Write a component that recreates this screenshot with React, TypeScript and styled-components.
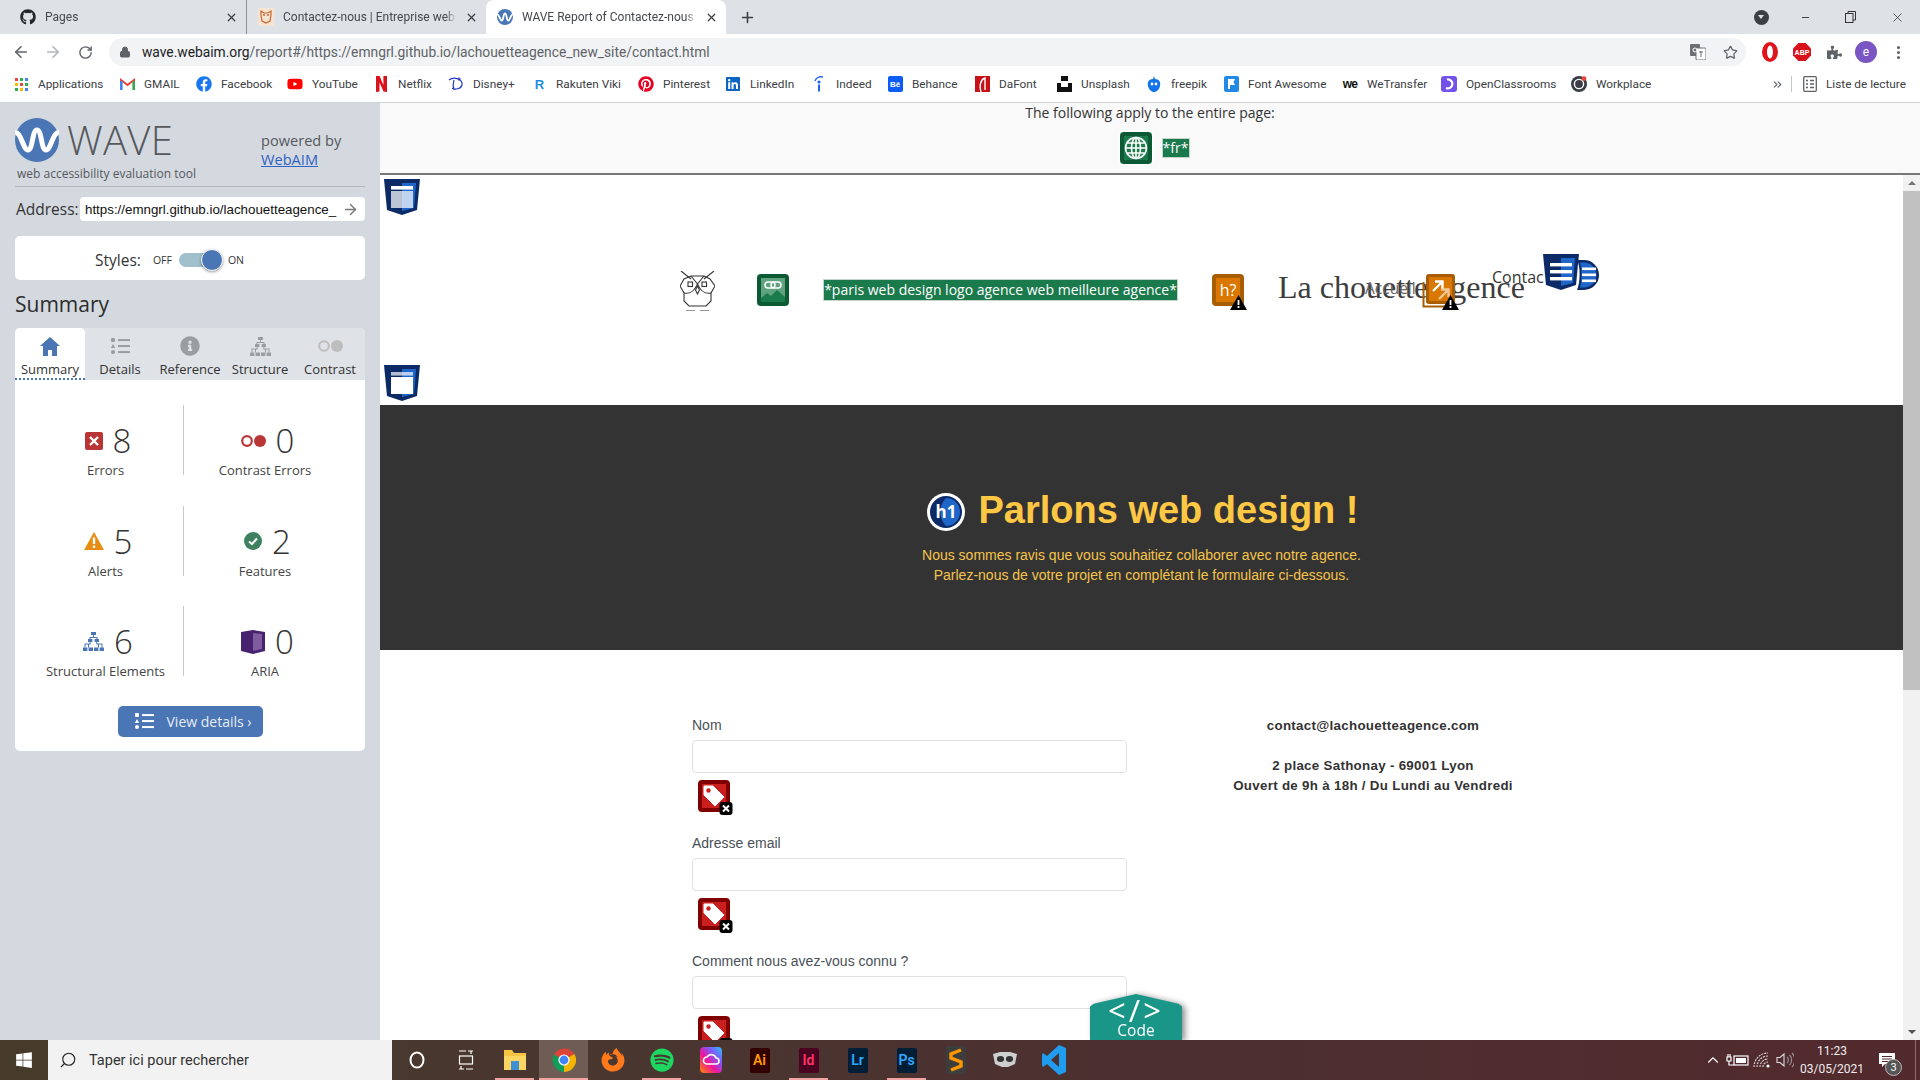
import React from "react";
import styled, { createGlobalStyle } from "styled-components";
import { ArrowLeft, ArrowRight, RotateCw, Star, Lock, X, Plus, Minus, Search, ChevronsRight, ArrowRight as Go, ChevronUp } from "lucide-react";
import { FaGithub, FaFacebook, FaYoutube, FaPinterest, FaLinkedin, FaSpotify, FaWindows, FaFirefoxBrowser, FaInfoCircle, FaPuzzlePiece } from "react-icons/fa";

const Global = createGlobalStyle`
  html, body { margin: 0; padding: 0; width: 1920px; height: 1080px; overflow: hidden; background: #fff; }
  * { box-sizing: border-box; }
  #root { width: 1920px; height: 1080px; }
`;

const chromeFont = `Roboto, "Liberation Sans", sans-serif`;
const waveFont = `"Open Sans", "Noto Sans", sans-serif`;
const arial = `"Liberation Sans", Arial, sans-serif`;

const Screen = styled.div`
  width: 1920px; height: 1080px; display: flex; flex-direction: column; overflow: hidden;
`;

/* ---------- tab strip ---------- */
const TabStrip = styled.div`
  height: 34px; flex: none; background: #dee1e6; display: flex; align-items: stretch;
`;
const Tab = styled.div<{ $w: number; $pl: number; $active?: boolean; $sep?: boolean }>`
  width: ${p => p.$w}px; flex: none; display: flex; align-items: center; gap: 9px;
  padding: 0 8px 0 ${p => p.$pl}px; font: 12px ${chromeFont}; color: #45484c;
  background: ${p => (p.$active ? "#fff" : "transparent")};
  border-radius: ${p => (p.$active ? "8px 8px 0 0" : "0")};
  border-right: ${p => (p.$sep ? "1px solid #8e9297" : "0")};
`;
const TabLabel = styled.span`
  flex: 1; min-width: 0; overflow: hidden; white-space: nowrap;
  mask-image: linear-gradient(90deg, #000 calc(100% - 10px), transparent 100%);
`;
const TabClose = styled(X)`
  width: 13px; height: 13px; flex: none; color: #3c4043; stroke-width: 2.4;
`;
const NewTab = styled.div`
  width: 42px; display: flex; align-items: center; justify-content: center; color: #3c4043;
`;
const WindowControls = styled.div`
  margin-left: auto; display: flex; align-items: center;
`;
const WinCell = styled.div<{ $w: number }>`
  width: ${p => p.$w}px; display: flex; align-items: center; justify-content: center; color: #333;
`;
const ProfileDot = styled.div`
  width: 15px; height: 15px; border-radius: 50%; background: #3c4043; display: flex; align-items: center; justify-content: center;
  &::after { content: ""; border-left: 3px solid transparent; border-right: 3px solid transparent; border-top: 4px solid #dee1e6; }
`;

/* ---------- toolbar ---------- */
const Toolbar = styled.div`
  height: 34px; flex: none; background: #fff; display: flex; align-items: center; padding: 2px 6px 0 5px;
`;
const ToolBtn = styled.div<{ $c?: string }>`
  width: 32px; height: 32px; flex: none; display: flex; align-items: center; justify-content: center; color: ${p => p.$c || "#5f6368"};
`;
const UrlPill = styled.div`
  margin: 0 8px; flex: 1; height: 28px; border-radius: 14px; background: #f1f3f4; display: flex; align-items: center; padding: 0 0 0 10px;
`;
const UrlText = styled.div`
  flex: 1; margin-left: 11px; font: 13.8px ${chromeFont}; color: #5f6368; white-space: nowrap;
  b { font-weight: 400; color: #202124; }
`;
const Avatar = styled.div`
  width: 22px; height: 22px; border-radius: 50%; background: #7b55c4; color: #fff; font: 12px ${chromeFont}; display: flex; align-items: center; justify-content: center;
`;
const MenuDots = styled.div`
  width: 3px; height: 3px; border-radius: 50%; background: #5f6368; box-shadow: 0 -5px 0 #5f6368, 0 5px 0 #5f6368;
`;

/* ---------- bookmarks ---------- */
const BookmarkBar = styled.div`
  height: 35px; flex: none; background: #fff; border-bottom: 1px solid #d0d2d5; display: flex; align-items: center; padding: 0 0 2px 13px;
`;
const Bookmark = styled.div<{ $w: number }>`
  width: ${p => p.$w}px; flex: none; display: flex; align-items: center; gap: 9px; font: 11.8px ${chromeFont}; color: #3c4043; white-space: nowrap;
`;
const BmIcon = styled.span`
  width: 16px; height: 16px; flex: none; display: flex; align-items: center; justify-content: center;
`;
const BmTile = styled.span<{ $bg: string; $c?: string }>`
  width: 15px; height: 16px; border-radius: 2px; background: ${p => p.$bg}; color: ${p => p.$c || "#fff"};
  font: 700 8px ${arial}; display: flex; align-items: center; justify-content: center; overflow: hidden;
`;
const BmGlyph = styled.span<{ $c: string; $s?: number }>`
  font: 900 ${p => p.$s || 13}px ${arial}; color: ${p => p.$c}; letter-spacing: -.8px;
`;
const BarEnd = styled.div`
  margin-left: auto; display: flex; align-items: center; font: 11.8px ${chromeFont}; color: #3c4043; padding-right: 2px;
`;
const Sep = styled.div`
  width: 1px; height: 16px; background: #c4c7ca; margin: 0 11px 0 7px;
`;
const ReadingLabel = styled.span`
  margin-left: 9px; width: 92px; white-space: nowrap;
`;

/* ---------- body ---------- */
const Body = styled.div`
  flex: 1; min-height: 0; display: flex;
`;
const Sidebar = styled.aside`
  width: 380px; flex: none; background: #d4d9e0; padding: 0 15px; font-family: ${waveFont}; color: #333;
`;
const Brand = styled.div`
  display: flex; border-bottom: 1px solid #b4b8bd; padding: 15px 0 3px; height: 84px;
`;
const BrandLeft = styled.div`
  width: 246px; flex: none;
`;
const LogoRow = styled.div`
  display: flex; align-items: center; gap: 8px; height: 44px;
`;
const WaveWord = styled.div`
  font: 300 40px/44px ${waveFont}; color: #55585c; letter-spacing: .3px;
`;
const Tagline = styled.div`
  font-size: 12px; line-height: 18px; color: #55585c; margin: 3px 0 0 2px; white-space: nowrap;
`;
const Powered = styled.div`
  padding-top: 13px; font-size: 14.6px; line-height: 19px; color: #55585c;
  a { color: #2f62c4; text-decoration: underline; }
`;
const AddressRow = styled.div`
  display: flex; align-items: center; margin-top: 10px; height: 24px;
`;
const AddressLabel = styled.div`
  width: 65px; flex: none; padding-left: 1px; font-size: 15.5px; color: #333;
`;
const AddressBox = styled.div`
  flex: 1; height: 24px; border-radius: 4px; background: #fff; display: flex; align-items: center; padding: 0 6px 0 5px; overflow: hidden;
`;
const AddressText = styled.div`
  width: 252px; flex: none; overflow: hidden; white-space: nowrap; font: 13.33px ${arial}; color: #111;
`;
const AddressGo = styled.div`
  margin-left: auto; display: flex; color: #777;
`;
const StylesCard = styled.div`
  margin-top: 15px; height: 44px; background: #fff; border-radius: 5px; display: flex; align-items: center; padding: 4px 0 0 80px;
`;
const StylesLabel = styled.span`
  font-size: 15.5px; color: #333; margin-right: 12px;
`;
const SwitchText = styled.span`
  font-size: 10.5px; color: #333;
`;
const Track = styled.div`
  position: relative; width: 27px; height: 14px; border-radius: 7px 0 0 7px; background: #9fc0cc; margin: 0 22px 0 7px;
`;
const Knob = styled.div`
  position: absolute; left: 22px; top: -4px; width: 22px; height: 22px; border-radius: 50%; background: #4a76b5; border: 1px solid #fff; box-shadow: 0 1px 3px rgba(0,0,0,.4);
`;
const SummaryTitle = styled.h2`
  margin: 9px 0 9px; font: 400 21px/30px ${waveFont}; color: #2c2c2c;
`;
const Panel = styled.div`
  background: #fff; border-radius: 5px; height: 423px;
`;
const Tabs = styled.div`
  display: flex; height: 52px; background: #dfe2e6; border-radius: 5px 5px 0 0;
`;
const SumTab = styled.div<{ $active?: boolean }>`
  width: 70px; display: flex; flex-direction: column; align-items: center; font-size: 13px; color: #333; padding-top: 6px;
  background: ${p => (p.$active ? "#fff" : "transparent")};
  border-radius: ${p => (p.$active ? "5px 5px 0 0" : "0")};
  border-bottom: 2px ${p => (p.$active ? "dotted #4a76b5" : "solid transparent")};
`;
const SumTabIcon = styled.div`
  height: 24px; display: flex; align-items: center; justify-content: center;
`;
const SumTabLabel = styled.div`
  line-height: 18px; margin-top: 2px; white-space: nowrap;
`;
const StatGrid = styled.div`
  padding: 25px 0 0 13px; display: grid; grid-template-columns: 156px 162px; grid-auto-rows: 70px; row-gap: 30.5px;
`;
const Stat = styled.div<{ $divider?: boolean }>`
  display: flex; flex-direction: column; align-items: center; padding-top: 15px;
  border-right: ${p => (p.$divider ? "1px solid #c9c9c9" : "0")};
`;
const StatTop = styled.div`
  display: flex; align-items: center; gap: 10px; height: 41px; padding-left: 5px; font: 300 33px/41px ${waveFont}; color: #333;
`;
const StatLabel = styled.div`
  font-size: 13px; line-height: 18px; color: #444; white-space: nowrap;
`;
const DetailsBtn = styled.div`
  width: 145px; height: 31px; margin: 30px auto 0; background: #4a76b5; border-radius: 5px; display: flex; align-items: center; padding-left: 17px; gap: 13px; color: #e6edf6; font-size: 14px;
`;

/* ---------- main ---------- */
const Main = styled.main`
  flex: 1; min-width: 0; display: flex; flex-direction: column; background: #fff;
`;
const PageWide = styled.div`
  height: 72px; flex: none; background: #f9f9f9; border-bottom: 2px solid #777; display: flex; flex-direction: column; align-items: center; font-family: ${waveFont}; padding-top: 1px;
`;
const WideText = styled.div`
  font-size: 14px; line-height: 18px; color: #333;
`;
const WideIcons = styled.div`
  display: flex; align-items: center; gap: 10px; margin-top: 10px; margin-left: 9px;
`;
const GlobeWrap = styled.div`
  display: flex; border-radius: 4px; box-shadow: 0 0 0 2px #fff;
`;
const LangTag = styled.div`
  height: 20px; width: 28px; background: #1a7a4c; border: 1px solid #c4d6cc; color: #fff; font-size: 14px; line-height: 17px; text-align: center; white-space: nowrap;
`;
const ViewRow = styled.div`
  flex: 1; min-height: 0; display: flex;
`;
const PageView = styled.div`
  flex: 1; min-width: 0; position: relative; overflow: hidden; display: flex; flex-direction: column;
`;
const SiteHeader = styled.div`
  position: relative; height: 230px; flex: none;
`;
const Pin = styled.div<{ $x: number; $y: number }>`
  position: absolute; left: ${p => p.$x}px; top: ${p => p.$y}px;
`;
const AltLabel = styled.div`
  width: 355px; height: 22px; background: #1a7a4c; border: 1px solid #c4d6cc; color: #fff; font: 14px/19px ${waveFont}; white-space: nowrap; overflow: hidden; text-align: center;
`;
const LogoText = styled.div`
  font: 32px/36px "Liberation Serif", serif; color: #3d3d3d; white-space: nowrap;
`;
const NavText = styled.div<{ $soft?: boolean }>`
  font: ${p => (p.$soft ? 15.5 : 16)}px/22px ${waveFont}; color: ${p => (p.$soft ? "#666" : "#333")}; white-space: nowrap;
`;
const Hero = styled.section`
  height: 245px; flex: none; background: #333; display: flex; flex-direction: column; align-items: center; padding-top: 83px; font-family: ${arial};
`;
const HeroTitle = styled.h1`
  margin: 0; padding-left: 3px; display: flex; align-items: center; gap: 13px; font: 700 38px/44px ${arial}; color: #fec844;
`;
const HeroBadgeWrap = styled.span`
  display: flex; margin-top: 4px;
`;
const HeroPara = styled.p`
  margin: 13px 0 0; font: 14px/20px ${arial}; color: #f7c44b; text-align: center;
`;
const FormSection = styled.section`
  flex: 1; display: flex; padding: 65px 0 0 312px; font-family: ${arial};
`;
const FormCol = styled.div`
  width: 435px; flex: none;
`;
const Field = styled.div`
  margin-bottom: 21px;
`;
const FieldLabel = styled.div`
  font: 14px/20px ${arial}; color: #495057; margin-bottom: 6px;
`;
const FieldInput = styled.div`
  height: 33px; margin-top: -1px; border: 1px solid #dfe1e4; border-radius: 4px; background: #fff; margin-bottom: 7px;
`;
const FieldIcon = styled.div`
  margin-left: 6px; height: 32px;
`;
const InfoCol = styled.div`
  width: 492px; flex: none; padding-top: 1px; text-align: center; font: 700 13.33px/20px ${arial}; color: #333; letter-spacing: .3px;
  p { margin: 0 0 20px; }
`;
const CodeWrap = styled.div`
  position: absolute; left: 710px; bottom: 0; filter: drop-shadow(3px 1px 3px rgba(0,0,0,.45));
`;
const CodeTab = styled.div`
  width: 92px; height: 46px; background: #1a9688; clip-path: polygon(50% 0, 96% 21%, 100% 27%, 100% 100%, 0 100%, 0 27%, 4% 21%);
  color: #fff; display: flex; flex-direction: column; align-items: center; font-family: ${waveFont};
`;
const CodeGlyph = styled.div`
  font: 400 31px/28px ${waveFont}; margin-top: 2px; letter-spacing: 3px; height: 25px;
`;
const CodeWord = styled.div`
  font-size: 15.5px; line-height: 18px;
`;
const Scrollbar = styled.div`
  width: 17px; flex: none; background: #f1f1f1; display: flex; flex-direction: column; align-items: center; padding-top: 6px;
`;
const ScrollUp = styled.div`
  border-left: 4px solid transparent; border-right: 4px solid transparent; border-bottom: 4px solid #777;
`;
const ScrollThumb = styled.div`
  width: 17px; height: 499px; background: #c1c1c1; margin-top: 6px;
`;
const ScrollDown = styled.div`
  margin-top: auto; margin-bottom: 6px; border-left: 4px solid transparent; border-right: 4px solid transparent; border-top: 4px solid #505050;
`;

/* ---------- taskbar ---------- */
const Taskbar = styled.footer`
  height: 40px; flex: none; display: flex; align-items: stretch;
  background: linear-gradient(90deg, #463a2b 0%, #4a3630 35%, #4c2f30 60%, #522a2e 100%);
`;
const StartBtn = styled.div`
  width: 48px; flex: none; display: flex; align-items: center; justify-content: center; color: #fff;
`;
const SearchBox = styled.div`
  width: 344px; flex: none; background: #f2f2f2; display: flex; align-items: center; padding-left: 11px; gap: 12px; font: 14.5px ${chromeFont}; color: #333;
`;
const SearchGlyph = styled(Search)`
  transform: scaleX(-1); color: #222; stroke-width: 1.5;
`;
const TaskItem = styled.div<{ $on?: boolean; $run?: boolean }>`
  width: 49px; flex: none; position: relative; display: flex; align-items: center; justify-content: center;
  background: ${p => (p.$on ? "#6f5c54" : "transparent")};
  &::after {
    content: ""; display: ${p => (p.$run ? "block" : "none")}; position: absolute; left: ${p => (p.$on ? 0 : 5)}px; right: ${p => (p.$on ? 0 : 5)}px; bottom: 0; height: 2px; background: #f2a3a3;
  }
`;
const AppTile = styled.div<{ $bg: string; $c: string }>`
  width: 20px; height: 25px; border-radius: 2px; background: ${p => p.$bg}; color: ${p => p.$c}; font: 600 14px ${chromeFont}; display: flex; align-items: center; justify-content: center;
`;
const Tray = styled.div`
  margin-left: auto; display: flex; align-items: center; color: #fff;
`;
const TrayCell = styled.div<{ $w: number }>`
  width: ${p => p.$w}px; height: 40px; position: relative; display: flex; align-items: center; justify-content: center;
`;
const Clock = styled.div`
  font: 12px/18px ${chromeFont}; text-align: center; color: #f0ecec;
`;
const NotifBadge = styled.div`
  position: absolute; left: 17px; top: 19px; width: 17px; height: 17px; border-radius: 50%; background: #555; border: 1px solid #bbb; color: #fff; font: 11px/15px ${chromeFont}; text-align: center;
`;
const ShowDesktop = styled.div`
  width: 5px; height: 40px; margin-left: 9px; border-left: 1px solid #8a6f6f;
`;

/* ---------- drawings ---------- */
const WaveLogo = ({ s = 44 }: { s?: number }) => (
  <svg width={s} height={s} viewBox="0 0 44 44">
    <circle cx="22" cy="22" r="22" fill="#4a76b5" />
    <path d="M0 15 C6 13 8 32 13 32 C18 32 17 12 22 12 C27 12 26 32 31 32 C36 32 38 13 44 15" fill="none" stroke="#fff" strokeWidth="5" />
  </svg>
);
const OwlFav = () => (
  <svg width="16" height="18" viewBox="0 0 16 18">
    <rect width="16" height="18" fill="#f6e3d2" />
    <path d="M3 3l3 2h4l3-2v4l-1 6-4 2-4-2-1-6z" fill="none" stroke="#c9682e" strokeWidth="1.2" />
    <circle cx="6" cy="7" r="1" fill="#c9682e" /><circle cx="10" cy="7" r="1" fill="#c9682e" />
  </svg>
);
const Shield = ({ kind }: { kind: "header" | "main" | "nav" }) => (
  <svg width="36" height="36" viewBox="0 0 36 36">
    <polygon points="0,0 36,0 33,31 18,36 3,31" fill="#0b2a66" />
    <polygon points="18,4 32,4 30,29 18,32" fill="#1f66c9" />
    {kind === "nav" ? (
      <g fill="#fff"><rect x="7" y="9" width="22" height="3.4" /><rect x="7" y="16" width="22" height="3.4" /><rect x="7" y="23" width="22" height="3.4" /></g>
    ) : (
      <>
        <rect x="7" y="7" width="22" height="3.6" fill="#fff" opacity={kind === "header" ? 1 : 0.7} />
        <rect x="7" y="12" width="22" height="17" fill="#fff" opacity={kind === "main" ? 1 : 0.72} />
      </>
    )}
  </svg>
);
const NavCircle = () => (
  <svg width="23" height="32" viewBox="0 0 23 32">
    <path d="M0 1 H7 A15 15 0 0 1 7 31 H0 C3 25 4 8 0 1Z" fill="#0b2a66" />
    <path d="M3 3.5 H7 A12.5 12.5 0 0 1 7 28.5 H3 C5 22 5 9 3 3.5Z" fill="#1f66c9" />
    <g fill="#fff"><rect x="5" y="8.5" width="14" height="2.6" /><rect x="5" y="14.5" width="14" height="2.6" /><rect x="5" y="20.5" width="14" height="2.6" /></g>
  </svg>
);
const Owl = () => (
  <svg width="35" height="40" viewBox="0 0 35 40" fill="none" stroke="#333" strokeWidth="1.1">
    <path d="M1 0 L11 8 M34 0 L24 8" />
    <path d="M11 5 H24 L30 8 L35 15 L31 22 V30 L26 35 H9 L4 30 V22 L0 15 L4 8Z" />
    <path d="M11 5 L17.5 13 L24 5 M4 22 C10 23 14 21 17.5 13 C21 21 25 23 31 22" />
    <rect x="8" y="11" width="4.5" height="4.5" /><rect x="22" y="11" width="4.5" height="4.5" />
    <path d="M17.5 15 L15.5 19 L17.5 23 L19.5 19Z" />
    <path d="M6 39.5 H15 M20 39.5 H29" stroke="#999" />
  </svg>
);
const LinkImage = () => (
  <svg width="32" height="32" viewBox="0 0 32 32">
    <rect width="32" height="32" rx="4" fill="#0b5a33" />
    <rect x="4" y="4" width="24" height="24" fill="#5fa27f" />
    <path d="M4 24 L10 19 L14 22 L20 16 L28 23 V28 H4Z" fill="#1a7a4c" />
    <g fill="none" stroke="#fff" strokeWidth="1.5">
      <rect x="8" y="8" width="10" height="6" rx="3" /><rect x="14" y="8" width="10" height="6" rx="3" />
    </g>
  </svg>
);
const GlobeIcon = () => (
  <svg width="32" height="32" viewBox="0 0 32 32" fill="none">
    <rect width="32" height="32" rx="4" fill="#0b5a33" />
    <rect x="4" y="4" width="24" height="24" fill="#1a7a4c" />
    <g stroke="#fff" strokeWidth="1.6">
      <circle cx="16" cy="16" r="10.5" /><ellipse cx="16" cy="16" rx="4.5" ry="10.5" />
      <path d="M16 5.5 V26.5 M5.5 16 H26.5 M7 11 H25 M7 21 H25" />
    </g>
  </svg>
);
const H1Badge = () => (
  <svg width="38" height="38" viewBox="0 0 38 38">
    <circle cx="19" cy="19" r="19" fill="#fff" />
    <circle cx="19" cy="19" r="16" fill="#0b2a66" />
    <path d="M19 5 A14 14 0 0 1 19 33 A20 20 0 0 1 19 5" fill="#1f66c9" />
    <text x="19" y="25" textAnchor="middle" fontFamily={waveFont} fontSize="17" fill="#fff">h1</text>
  </svg>
);
const HQuestion = () => (
  <svg width="36" height="36" viewBox="0 0 36 36">
    <rect width="32" height="32" rx="4" fill="#a85e00" />
    <rect x="4" y="4" width="24" height="24" fill="#d97700" />
    <text x="16" y="22" textAnchor="middle" fontFamily={waveFont} fontSize="16" fill="#fff">h?</text>
    <g transform="translate(18,21)"><polygon points="8.5,0 17,15 0,15" fill="#000" /><rect x="7.6" y="5" width="1.8" height="5" fill="#fff" /><rect x="7.6" y="11" width="1.8" height="2" fill="#fff" /></g>
  </svg>
);
const External = () => (
  <svg width="38" height="38" viewBox="0 0 38 38">
    <path d="M1.5 8 V32.5 H28" fill="none" stroke="#a85e00" strokeWidth="2" />
    <rect x="4" y="0" width="29" height="30" rx="3" fill="#a85e00" />
    <rect x="7" y="3" width="23" height="24" fill="#d97700" />
    <path d="M11 17 L20 8 M13 7.5 H20.5 V15" fill="none" stroke="#fff" strokeWidth="2.4" />
    <path d="M17 25 L26 16 M19 15.5 H26.5 V23" fill="none" stroke="#f2c79a" strokeWidth="2.4" />
    <g transform="translate(20,21)"><polygon points="8.5,0 17,15 0,15" fill="#000" /><rect x="7.6" y="5" width="1.8" height="5" fill="#fff" /><rect x="7.6" y="11" width="1.8" height="2" fill="#fff" /></g>
  </svg>
);
const TagError = () => (
  <svg width="36" height="36" viewBox="0 0 36 36">
    <rect width="32" height="32" rx="4" fill="#800000" />
    <rect x="4" y="4" width="24" height="24" fill="#c91f1f" />
    <path d="M6 6 H15 L26 17 L17 26 L6 15Z" fill="#fff" stroke="#fff" strokeLinejoin="round" />
    <circle cx="10.5" cy="10.5" r="2.2" fill="#c91f1f" />
    <rect x="21.5" y="22" width="13" height="13" rx="3" fill="#000" />
    <path d="M25 25.5 L31 31.5 M31 25.5 L25 31.5" stroke="#fff" strokeWidth="2" />
  </svg>
);
const HomeGlyph = () => (
  <svg width="20" height="19" viewBox="0 0 20 19" fill="#4a76b5">
    <polygon points="10,0 20,9 17,9 17,19 12,19 12,13 8,13 8,19 3,19 3,9 0,9" />
  </svg>
);
const ListIcon = ({ c, w = 19 }: { c: string; w?: number }) => (
  <svg width={w} height={w * 0.85} viewBox="0 0 19 16" fill={c}>
    <rect x="0" y="0" width="4" height="4" rx="1" /><polygon points="2,6 4.2,10 -.2,10" /><circle cx="2" cy="14" r="2" />
    <rect x="7" y="1" width="12" height="2" /><rect x="7" y="7" width="12" height="2" /><rect x="7" y="13" width="12" height="2" />
  </svg>
);
const TreeGlyph = ({ c }: { c: string }) => (
  <svg width="21" height="19" viewBox="0 0 21 19" fill={c}>
    <rect x="8" y="0" width="5" height="3" />
    <rect x="5" y="7" width="4.4" height="3" /><rect x="11.6" y="7" width="4.4" height="3" />
    <rect x="0" y="15.5" width="4.4" height="3.5" /><rect x="5.6" y="15.5" width="4.4" height="3.5" /><rect x="11" y="15.5" width="4.4" height="3.5" /><rect x="16.6" y="15.5" width="4.4" height="3.5" />
    <path d="M10 3 h1 v2 h3.5 v2 h-1 v-1 h-6 v1 h-1 v-2 h3.5z" />
    <path d="M6.6 10 h1 v2.5 h-1.6 v3 h-1 v-3 h-2.5 v3 h-1 v-4 h5.1z M13.3 10 h1 v1.5 h5.2 v4 h-1 v-3 h-2.5 v3 h-1 v-3 h-1.7z" />
  </svg>
);
const ContrastGlyph = ({ c, w, sw = 2 }: { c: string; w: number; sw?: number }) => (
  <svg width={w} height={w * 0.48} viewBox="0 0 25 12">
    <circle cx="6" cy="6" r="4.8" fill="none" stroke={c} strokeWidth={sw} /><circle cx="19" cy="6" r="6" fill={c} />
  </svg>
);
const ErrorGlyph = () => (
  <svg width="18" height="18" viewBox="0 0 18 18">
    <rect width="18" height="18" rx="2" fill="#b93536" />
    <path d="M5 5 L13 13 M13 5 L5 13" stroke="#fff" strokeWidth="2.4" />
  </svg>
);
const AlertGlyph = () => (
  <svg width="20" height="18" viewBox="0 0 20 18">
    <polygon points="10,0 20,18 0,18" fill="#e68d12" /><rect x="8.8" y="5.5" width="2.4" height="6.5" fill="#fff" /><rect x="8.8" y="13.5" width="2.4" height="2.4" fill="#fff" />
  </svg>
);
const FeatureGlyph = () => (
  <svg width="18" height="18" viewBox="0 0 18 18">
    <circle cx="9" cy="9" r="9" fill="#3e8060" /><path d="M5 9.5 L8 12 L13 6.5" fill="none" stroke="#fff" strokeWidth="2" />
  </svg>
);
const AriaGlyph = () => (
  <svg width="24" height="24" viewBox="0 0 24 24">
    <polygon points="0,2 12,0 24,2 24,21 12,24 0,21" fill="#46226f" /><polygon points="12,3 21,4 21,19 12,21" fill="#7e5c9e" />
  </svg>
);
const Apps = () => (
  <svg width="13" height="13" viewBox="0 0 13 13">
    {["#e8453c", "#34a853", "#4285f4", "#fbbc05", "#e8453c", "#34a853", "#34a853", "#fbbc05", "#4285f4"].map((c, i) => (
      <rect key={i} x={(i % 3) * 5} y={Math.floor(i / 3) * 5} width="3" height="3" fill={c} />
    ))}
  </svg>
);
const Gmail = () => (
  <svg width="15" height="12" viewBox="0 0 15 12">
    <path d="M1 11 V2 L7.5 7 L14 2 V11" fill="none" stroke="#ea4335" strokeWidth="2" />
    <rect x="0" y="3" width="2.6" height="9" fill="#4285f4" /><rect x="12.4" y="3" width="2.6" height="9" fill="#34a853" />
  </svg>
);
const Netflix = () => (
  <svg width="11" height="16" viewBox="0 0 11 16"><path d="M0 0 H3.6 L7.4 9 V0 H11 V16 L7.5 15.5 L3.5 6.5 V15.5 L0 16Z" fill="#d9131d" /></svg>
);
const Disney = () => (
  <svg width="16" height="16" viewBox="0 0 16 16" fill="none" stroke="#2236c8" strokeWidth="1.2">
    <path d="M1 4 C6 0 15 3 14 9 C13 13 7 14 4 12 M6 4 C5 7 5 11 6 14" /><path d="M11 1 V5 M9 3 H13" strokeWidth=".8" />
  </svg>
);
const Indeed = () => (
  <svg width="10" height="16" viewBox="0 0 10 16" fill="none">
    <path d="M1 5 C2 2 5 0 9 1" stroke="#2164f3" strokeWidth="1.4" /><circle cx="5" cy="6" r="1.6" fill="#2164f3" /><rect x="4" y="8.5" width="2" height="7" fill="#2164f3" />
  </svg>
);
const DaFont = () => (
  <svg width="15" height="16" viewBox="0 0 15 16">
    <rect width="15" height="16" fill="#c8121a" /><path d="M6 16 C4 9 6 3 10 2 V14" fill="none" stroke="#fff" strokeWidth="1.4" />
  </svg>
);
const Unsplash = () => (
  <svg width="15" height="16" viewBox="0 0 15 16" fill="#111"><rect x="4" y="0" width="7" height="5" /><path d="M0 7 H4 V11 H11 V7 H15 V16 H0Z" /></svg>
);
const Freepik = () => (
  <svg width="14" height="16" viewBox="0 0 14 16">
    <path d="M7 0 L8 3 C12 3 14 6 13 10 C12 14 9 16 7 16 C5 16 2 14 1 10 C0 6 2 3 6 3Z" fill="#1273eb" />
    <circle cx="5" cy="8" r="1.4" fill="#fff" /><circle cx="9" cy="8" r="1.4" fill="#fff" />
  </svg>
);
const FontAwesome = () => (
  <svg width="15" height="16" viewBox="0 0 15 16"><rect width="15" height="16" rx="2" fill="#228ae6" /><path d="M4 3 H11 L9.5 6 L11 9 H6 V13 H4Z" fill="#fff" /></svg>
);
const OC = () => (
  <svg width="16" height="16" viewBox="0 0 16 16"><rect width="16" height="16" rx="3" fill="#7451eb" /><path d="M6 3.5 A4.5 4.5 0 1 1 5 12" fill="none" stroke="#fff" strokeWidth="2.2" /></svg>
);
const Workplace = () => (
  <svg width="16" height="16" viewBox="0 0 16 16" fill="none">
    <circle cx="8" cy="8" r="8" fill="#3a3d45" /><circle cx="8" cy="8" r="4.6" stroke="#fff" strokeWidth="1.4" /><circle cx="13" cy="2.6" r="2.4" fill="#e8453c" />
  </svg>
);
const ReadingList = () => (
  <svg width="14" height="16" viewBox="0 0 14 16" fill="none" stroke="#5f6368" strokeWidth="1.3">
    <rect x=".7" y=".7" width="12.6" height="14.6" rx="1" /><path d="M3 4.5 H5 M7 4.5 H11 M3 8 H5 M7 8 H11 M3 11.5 H5 M7 11.5 H11" />
  </svg>
);
const Translate = () => (
  <svg width="16" height="16" viewBox="0 0 16 16">
    <rect x="0" y="0" width="10" height="12" rx="1" fill="#6b6f73" /><rect x="6" y="4" width="10" height="12" rx="1" fill="#fff" stroke="#6b6f73" />
    <circle cx="5" cy="6" r="2" fill="none" stroke="#fff" /><path d="M9 8 H13 M11 7 V13" stroke="#6b6f73" />
  </svg>
);
const Restore = () => (
  <svg width="11" height="12" viewBox="0 0 11 12" fill="none" stroke="#333"><rect x=".5" y="2.5" width="7.5" height="9" /><path d="M3 2.5 V.5 H10.5 V9 H8" /></svg>
);
const OperaBadge = () => (
  <svg width="16" height="20" viewBox="0 0 16 20"><ellipse cx="8" cy="10" rx="8" ry="10" fill="#e0141c" /><ellipse cx="8" cy="10" rx="3" ry="6.5" fill="#fff" /></svg>
);
const AbpBadge = () => (
  <svg width="18" height="18" viewBox="0 0 18 18">
    <polygon points="5.4,0 12.6,0 18,5.4 18,12.6 12.6,18 5.4,18 0,12.6 0,5.4" fill="#d8121b" />
    <text x="9" y="12" textAnchor="middle" fontFamily={arial} fontWeight="700" fontSize="7" fill="#fff">ABP</text>
  </svg>
);
const ChromeLogo = () => (
  <svg width="24" height="24" viewBox="0 0 24 24">
    <path d="M12 12 L2 6.5 A12 12 0 0 1 22.4 6 Z" fill="#db4437" />
    <path d="M12 12 L22.4 6 A12 12 0 0 1 12 24 Z" fill="#f4b400" />
    <path d="M12 12 L12 24 A12 12 0 0 1 2 6.5 Z" fill="#0f9d58" />
    <circle cx="12" cy="12" r="5.6" fill="#fff" /><circle cx="12" cy="12" r="4.4" fill="#4285f4" />
  </svg>
);
const Explorer = () => (
  <svg width="22" height="22" viewBox="0 0 22 22">
    <path d="M0 1 H8 L10 4 H22 V21 H0Z" fill="#f5c543" /><rect x="0" y="7" width="22" height="14" fill="#fbd663" /><rect x="7" y="12" width="8" height="9" fill="#3d8fd6" />
  </svg>
);
const TaskView = () => (
  <svg width="16" height="20" viewBox="0 0 16 20" fill="none" stroke="#fff" strokeWidth="1.2">
    <rect x="1.5" y="6" width="13" height="8" /><path d="M1 1 H8 M10 1 H15 M13 1 V4 M1 19 H6 M8 19 H15 M3 16 V19" />
  </svg>
);
const Cortana = () => (
  <svg width="16" height="20" viewBox="0 0 16 20"><ellipse cx="8" cy="10" rx="6.5" ry="7.5" fill="none" stroke="#fff" strokeWidth="2" /></svg>
);
const CreativeCloud = () => (
  <svg width="22" height="26" viewBox="0 0 22 26">
    <defs><linearGradient id="cc" x1="0" y1="1" x2="1" y2="0"><stop offset="0" stopColor="#ff8a00" /><stop offset=".4" stopColor="#f0149a" /><stop offset=".7" stopColor="#7a5cff" /><stop offset="1" stopColor="#26c6f0" /></linearGradient></defs>
    <rect width="22" height="26" rx="4" fill="url(#cc)" />
    <path d="M7 17 A3.5 3.5 0 0 1 7 10 A5 5 0 0 1 16 11 A3 3 0 0 1 16 17Z" fill="none" stroke="#fff" strokeWidth="1.6" />
  </svg>
);
const Sublime = () => (
  <svg width="20" height="28" viewBox="0 0 20 28">
    <rect width="20" height="28" fill="#3d3d3d" />
    <path d="M15 6 L5 10 V14 L15 18 V22 L5 26" fill="none" stroke="#ff9800" strokeWidth="3.4" transform="translate(0,-2)" />
  </svg>
);
const Mask = () => (
  <svg width="24" height="18" viewBox="0 0 24 18">
    <path d="M0 3 L7 1 H17 L24 3 L22 13 L15 16 H9 L2 13Z" fill="#cfcfcf" />
    <ellipse cx="7.5" cy="8" rx="3.6" ry="3" fill="#333" /><ellipse cx="16.5" cy="8" rx="3.6" ry="3" fill="#333" />
  </svg>
);
const VSCode = () => (
  <svg width="24" height="30" viewBox="0 0 24 30">
    <path d="M17 0 L24 3 V27 L17 30 L5 19 L1 22 L0 20 V10 L1 8 L5 11Z M17 8 L9 15 L17 22Z" fill="#1f9cf0" fillRule="evenodd" />
  </svg>
);
const Battery = () => (
  <svg width="24" height="14" viewBox="0 0 24 14" fill="none" stroke="#fff" strokeWidth="1.2">
    <rect x="8" y="3" width="14" height="9" /><rect x="10" y="5" width="10" height="5" fill="#fff" stroke="none" /><path d="M1 4 H5 V8 H1Z M2 1 V4 M4 1 V4 M3 8 V12 H8" />
  </svg>
);
const Wifi = () => (
  <svg width="18" height="16" viewBox="0 0 18 16" fill="none" stroke="#ddd" strokeWidth="1.1">
    <path d="M1 15 A14 14 0 0 1 15 1 M4 15 A11 11 0 0 1 15 4 M7 15 A8 8 0 0 1 15 7 M10 15 A5 5 0 0 1 15 10" strokeDasharray="2 1" /><circle cx="15" cy="14" r="1.6" fill="#fff" stroke="none" />
  </svg>
);
const Volume = () => (
  <svg width="18" height="16" viewBox="0 0 18 16" fill="none" stroke="#ddd" strokeWidth="1.1">
    <path d="M1 5.5 H4 L8 2 V14 L4 10.5 H1Z" /><path d="M11 5 A4 4 0 0 1 11 11 M13.5 3 A7 7 0 0 1 13.5 13 M16 1 A10 10 0 0 1 16 15" stroke="#999" />
  </svg>
);
const ActionCenter = () => (
  <svg width="16" height="15" viewBox="0 0 16 15">
    <path d="M0 0 H16 V11 H6 L3 14 V11 H0Z" fill="#fff" />
    <path d="M3 3.5 H13 M3 6 H13 M3 8.5 H10" stroke="#522a2e" strokeWidth="1" />
  </svg>
);

/* ---------- data ---------- */
const bookmarks: { label: string; w: number; icon: React.ReactNode }[] = [
  { label: "Applications", w: 106, icon: <Apps /> },
  { label: "GMAIL", w: 77, icon: <Gmail /> },
  { label: "Facebook", w: 91, icon: <FaFacebook size={16} color="#1877f2" /> },
  { label: "YouTube", w: 86, icon: <FaYoutube size={16} color="#f00" /> },
  { label: "Netflix", w: 75, icon: <Netflix /> },
  { label: "Disney+", w: 83, icon: <Disney /> },
  { label: "Rakuten Viki", w: 107, icon: <BmGlyph $c="#1a8fe3">R</BmGlyph> },
  { label: "Pinterest", w: 87, icon: <FaPinterest size={16} color="#e60023" /> },
  { label: "LinkedIn", w: 86, icon: <FaLinkedin size={16} color="#0a66c2" /> },
  { label: "Indeed", w: 76, icon: <Indeed /> },
  { label: "Behance", w: 87, icon: <BmTile $bg="#0b5cf5">Bē</BmTile> },
  { label: "DaFont", w: 82, icon: <DaFont /> },
  { label: "Unsplash", w: 90, icon: <Unsplash /> },
  { label: "freepik", w: 77, icon: <Freepik /> },
  { label: "Font Awesome", w: 119, icon: <FontAwesome /> },
  { label: "WeTransfer", w: 99, icon: <BmGlyph $c="#111" $s={12}>we</BmGlyph> },
  { label: "OpenClassrooms", w: 130, icon: <OC /> },
  { label: "Workplace", w: 90, icon: <Workplace /> },
];

const tabs: { label: string; icon: React.ReactNode }[] = [
  { label: "Summary", icon: <HomeGlyph /> },
  { label: "Details", icon: <ListIcon c="#9a9da1" /> },
  { label: "Reference", icon: <FaInfoCircle size={20} color="#9a9da1" /> },
  { label: "Structure", icon: <TreeGlyph c="#9a9da1" /> },
  { label: "Contrast", icon: <ContrastGlyph c="#bdbdbd" w={25} /> },
];

const stats: { n: number; label: string; icon: React.ReactNode }[] = [
  { n: 8, label: "Errors", icon: <ErrorGlyph /> },
  { n: 0, label: "Contrast Errors", icon: <ContrastGlyph c="#b93536" w={25} sw={2.2} /> },
  { n: 5, label: "Alerts", icon: <AlertGlyph /> },
  { n: 2, label: "Features", icon: <FeatureGlyph /> },
  { n: 6, label: "Structural Elements", icon: <TreeGlyph c="#4a76b5" /> },
  { n: 0, label: "ARIA", icon: <AriaGlyph /> },
];

const taskApps: { node: React.ReactNode; on?: boolean; run?: boolean }[] = [
  { node: <Cortana /> },
  { node: <TaskView /> },
  { node: <Explorer />, run: true },
  { node: <ChromeLogo />, on: true, run: true },
  { node: <FaFirefoxBrowser size={24} color="#ff7a1a" /> },
  { node: <FaSpotify size={24} color="#1ed760" />, run: true },
  { node: <CreativeCloud /> },
  { node: <AppTile $bg="#330000" $c="#ff9a00">Ai</AppTile> },
  { node: <AppTile $bg="#49021f" $c="#ff3366">Id</AppTile>, run: true },
  { node: <AppTile $bg="#001e36" $c="#31a8ff">Lr</AppTile> },
  { node: <AppTile $bg="#001e36" $c="#31a8ff">Ps</AppTile>, run: true },
  { node: <Sublime /> },
  { node: <Mask /> },
  { node: <VSCode /> },
];

const fields = ["Nom", "Adresse email", "Comment nous avez-vous connu ?"];

export default function App() {
  return (
    <Screen>
      <Global />
      <TabStrip>
        <Tab $w={247} $pl={20} $sep>
          <FaGithub size={16} color="#24292e" />
          <TabLabel>Pages</TabLabel>
          <TabClose />
        </Tab>
        <Tab $w={239} $pl={11}>
          <OwlFav />
          <TabLabel>Contactez-nous | Entreprise web à Lyon</TabLabel>
          <TabClose />
        </Tab>
        <Tab $w={240} $pl={11} $active>
          <WaveLogo s={16} />
          <TabLabel>WAVE Report of Contactez-nous | Entreprise</TabLabel>
          <TabClose />
        </Tab>
        <NewTab><Plus size={17} strokeWidth={2.2} /></NewTab>
        <WindowControls>
          <WinCell $w={46}><ProfileDot /></WinCell>
          <WinCell $w={42}><Minus size={11} /></WinCell>
          <WinCell $w={48}><Restore /></WinCell>
          <WinCell $w={46}><X size={15} strokeWidth={1.2} /></WinCell>
        </WindowControls>
      </TabStrip>

      <Toolbar>
        <ToolBtn><ArrowLeft size={18} strokeWidth={2.2} /></ToolBtn>
        <ToolBtn $c="#b3b6b9"><ArrowRight size={18} strokeWidth={2.2} /></ToolBtn>
        <ToolBtn><RotateCw size={15} strokeWidth={2.2} /></ToolBtn>
        <UrlPill>
          <Lock size={12} color="#5f6368" fill="#5f6368" />
          <UrlText><b>wave.webaim.org</b>/report#/https://emngrl.github.io/lachouetteagence_new_site/contact.html</UrlText>
          <ToolBtn><Translate /></ToolBtn>
          <ToolBtn><Star size={15} /></ToolBtn>
        </UrlPill>
        <ToolBtn><OperaBadge /></ToolBtn>
        <ToolBtn><AbpBadge /></ToolBtn>
        <ToolBtn><FaPuzzlePiece size={15} /></ToolBtn>
        <ToolBtn><Avatar>e</Avatar></ToolBtn>
        <ToolBtn><MenuDots /></ToolBtn>
      </Toolbar>

      <BookmarkBar>
        {bookmarks.map(b => (
          <Bookmark key={b.label} $w={b.w}><BmIcon>{b.icon}</BmIcon>{b.label}</Bookmark>
        ))}
        <BarEnd>
          <ChevronsRight size={13} color="#5f6368" />
          <Sep />
          <ReadingList />
          <ReadingLabel>Liste de lecture</ReadingLabel>
        </BarEnd>
      </BookmarkBar>

      <Body>
        <Sidebar>
          <Brand>
            <BrandLeft>
              <LogoRow><WaveLogo /><WaveWord>WAVE</WaveWord></LogoRow>
              <Tagline>web accessibility evaluation tool</Tagline>
            </BrandLeft>
            <Powered>powered by<br /><a>WebAIM</a></Powered>
          </Brand>
          <AddressRow>
            <AddressLabel>Address:</AddressLabel>
            <AddressBox>
              <AddressText>https://emngrl.github.io/lachouetteagence_</AddressText>
              <AddressGo><Go size={17} strokeWidth={2} /></AddressGo>
            </AddressBox>
          </AddressRow>
          <StylesCard>
            <StylesLabel>Styles:</StylesLabel>
            <SwitchText>OFF</SwitchText>
            <Track><Knob /></Track>
            <SwitchText>ON</SwitchText>
          </StylesCard>
          <SummaryTitle>Summary</SummaryTitle>
          <Panel>
            <Tabs>
              {tabs.map((t, i) => (
                <SumTab key={t.label} $active={i === 0}>
                  <SumTabIcon>{t.icon}</SumTabIcon>
                  <SumTabLabel>{t.label}</SumTabLabel>
                </SumTab>
              ))}
            </Tabs>
            <StatGrid>
              {stats.map((s, i) => (
                <Stat key={s.label} $divider={i % 2 === 0}>
                  <StatTop>{s.icon}{s.n}</StatTop>
                  <StatLabel>{s.label}</StatLabel>
                </Stat>
              ))}
            </StatGrid>
            <DetailsBtn><ListIcon c="#fff" />View details ›</DetailsBtn>
          </Panel>
        </Sidebar>

        <Main>
          <PageWide>
            <WideText>The following apply to the entire page:</WideText>
            <WideIcons><GlobeWrap><GlobeIcon /></GlobeWrap><LangTag>*fr*</LangTag></WideIcons>
          </PageWide>
          <ViewRow>
            <PageView>
              <SiteHeader>
                <Pin $x={4} $y={4}><Shield kind="header" /></Pin>
                <Pin $x={300} $y={96}><Owl /></Pin>
                <Pin $x={377} $y={99}><LinkImage /></Pin>
                <Pin $x={443} $y={104}><AltLabel>*paris web design logo agence web meilleure agence*</AltLabel></Pin>
                <Pin $x={832} $y={99}><HQuestion /></Pin>
                <Pin $x={898} $y={94}><LogoText>La chouette agence</LogoText></Pin>
                <Pin $x={985} $y={102}><NavText $soft>Accueil</NavText></Pin>
                <Pin $x={1042} $y={99}><External /></Pin>
                <Pin $x={1112} $y={91}><NavText>Contac</NavText></Pin>
                <Pin $x={1163} $y={79}><Shield kind="nav" /></Pin>
                <Pin $x={1197} $y={84}><NavCircle /></Pin>
                <Pin $x={4} $y={190}><Shield kind="main" /></Pin>
              </SiteHeader>
              <Hero>
                <HeroTitle><HeroBadgeWrap><H1Badge /></HeroBadgeWrap>Parlons web design !</HeroTitle>
                <HeroPara>Nous sommes ravis que vous souhaitiez collaborer avec notre agence.<br />Parlez-nous de votre projet en complétant le formulaire ci-dessous.</HeroPara>
              </Hero>
              <FormSection>
                <FormCol>
                  {fields.map(f => (
                    <Field key={f}>
                      <FieldLabel>{f}</FieldLabel>
                      <FieldInput />
                      <FieldIcon><TagError /></FieldIcon>
                    </Field>
                  ))}
                </FormCol>
                <InfoCol>
                  <p>contact@lachouetteagence.com</p>
                  <p>2 place Sathonay - 69001 Lyon<br />Ouvert de 9h à 18h / Du Lundi au Vendredi</p>
                </InfoCol>
              </FormSection>
              <CodeWrap>
                <CodeTab>
                  <CodeGlyph>&lt;/&gt;</CodeGlyph>
                  <CodeWord>Code</CodeWord>
                </CodeTab>
              </CodeWrap>
            </PageView>
            <Scrollbar>
              <ScrollUp />
              <ScrollThumb />
              <ScrollDown />
            </Scrollbar>
          </ViewRow>
        </Main>
      </Body>

      <Taskbar>
        <StartBtn><FaWindows size={18} /></StartBtn>
        <SearchBox><SearchGlyph size={18} />Taper ici pour rechercher</SearchBox>
        {taskApps.map((a, i) => (
          <TaskItem key={i} $on={a.on} $run={a.run}>{a.node}</TaskItem>
        ))}
        <Tray>
          <TrayCell $w={24}><ChevronUp size={18} strokeWidth={1.5} /></TrayCell>
          <TrayCell $w={25}><Battery /></TrayCell>
          <TrayCell $w={23}><Wifi /></TrayCell>
          <TrayCell $w={23}><Volume /></TrayCell>
          <TrayCell $w={72}><Clock>11:23<br />03/05/2021</Clock></TrayCell>
          <TrayCell $w={38}>
            <ActionCenter />
            <NotifBadge>3</NotifBadge>
          </TrayCell>
          <ShowDesktop />
        </Tray>
      </Taskbar>
    </Screen>
  );
}
